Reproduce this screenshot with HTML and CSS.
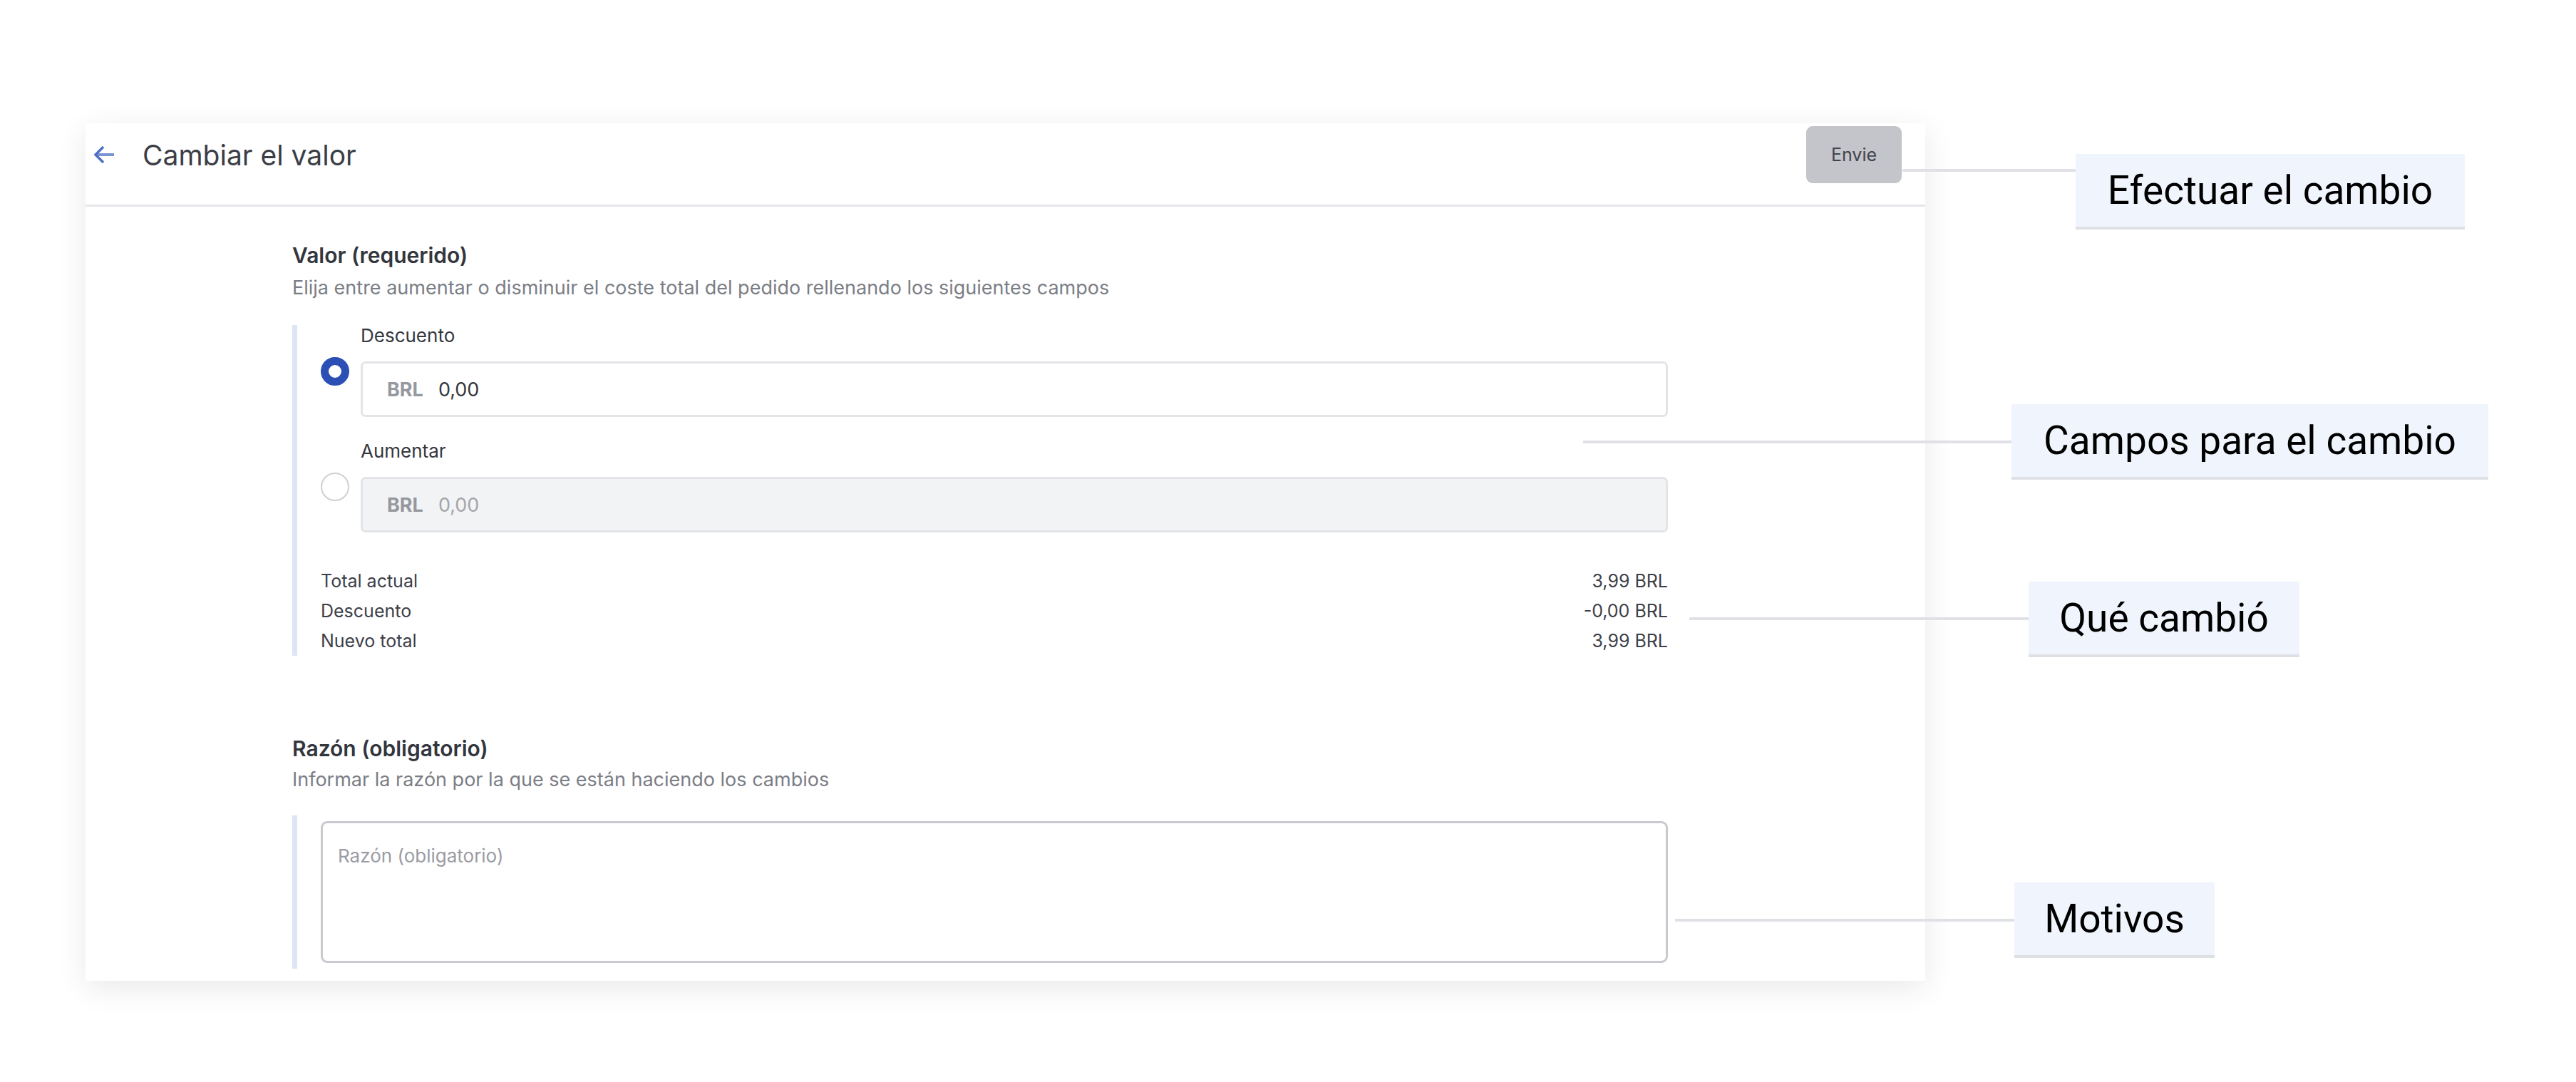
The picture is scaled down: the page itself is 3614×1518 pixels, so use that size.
FILE: index.html
```html
<!DOCTYPE html>
<html>
  <head>
    <link rel="stylesheet" href="styles.css">
  </head>
  <body>
    <div class="stage">
      <div class="card">
        <div class="card-header">
          <svg class="back" width="30" height="26" viewBox="0 0 30 26">
            <path d="M29 13H4" stroke="#7b95d2" stroke-width="4" fill="none" />
            <path d="M14 2L3 13l11 11" stroke="#4d6fc7" stroke-width="3.5" fill="none" />
          </svg>
          <h1 class="title">Cambiar el valor</h1>
          <button class="btn-submit">Envie</button>
        </div>

        <div class="card-body">
          <section class="block">
            <h2>Valor (requerido)</h2>
            <p class="hint">Elija entre aumentar o disminuir el coste total del pedido rellenando los siguientes campos</p>

            <div class="group">
              <div class="option">
                <span class="radio checked"></span>
                <div class="field">
                  <label>Descuento</label>
                  <div class="money-input">
                    <span class="currency">BRL</span>
                    <span class="amount">0,00</span>
                  </div>
                </div>
              </div>

              <div class="option second">
                <span class="radio"></span>
                <div class="field">
                  <label>Aumentar</label>
                  <div class="money-input disabled">
                    <span class="currency">BRL</span>
                    <span class="amount">0,00</span>
                  </div>
                </div>
              </div>

              <div class="summary">
                <div class="summary-row"><span>Total actual</span><span>3,99 BRL</span></div>
                <div class="summary-row"><span>Descuento</span><span>-0,00 BRL</span></div>
                <div class="summary-row"><span>Nuevo total</span><span>3,99 BRL</span></div>
              </div>
            </div>
          </section>

          <section class="block reason">
            <h2>Razón (obligatorio)</h2>
            <p class="hint">Informar la razón por la que se están haciendo los cambios</p>
            <div class="group boxed">
              <textarea class="reason-text" placeholder="Razón (obligatorio)"></textarea>
            </div>
          </section>
        </div>
      </div>

      <!-- callouts -->
      <div class="connector" style="left: 2669px; top: 237px; width: 243px"></div>
      <div class="callout" style="left: 2912px; top: 216px; width: 546px">Efectuar el cambio</div>

      <div class="connector" style="left: 2221px; top: 618px; width: 601px"></div>
      <div class="callout" style="left: 2822px; top: 567px; width: 669px">Campos para el cambio</div>

      <div class="connector" style="left: 2370px; top: 866px; width: 476px"></div>
      <div class="callout" style="left: 2846px; top: 816px; width: 380px">Qué cambió</div>

      <div class="connector" style="left: 2350px; top: 1289px; width: 476px"></div>
      <div class="callout" style="left: 2826px; top: 1238px; width: 281px">Motivos</div>
    </div>
  </body>
</html>
```

FILE: styles.css
```css
body {
  margin: 0;
  background: #ffffff;
  font-family: Inter, "Noto Sans", sans-serif;
  color: #34373e;
}
.stage {
  position: relative;
  width: 3614px;
  height: 1518px;
  padding: 173px 0 0 120px;
  box-sizing: border-box;
}
.card {
  width: 2581px;
  background: #fff;
  box-shadow: 0 10px 40px rgba(0, 0, 0, 0.09);
}
.card-header {
  display: flex;
  align-items: center;
  padding: 4px 33px 30px 11px;
  border-bottom: 3px solid #e6e7eb;
}
.back {
  flex: none;
}
.title {
  flex: 1;
  margin: 0 0 0 39px;
  font-size: 39px;
  font-weight: 400;
  color: #3b3e46;
}
.btn-submit {
  width: 134px;
  height: 80px;
  border: none;
  border-radius: 9px;
  background: #c4c5ca;
  color: #41444d;
  font-family: Inter, sans-serif;
  font-size: 25px;
}
.card-body {
  padding: 0 361px 17px 290px;
}
.block h2 {
  margin: 51px 0 0;
  font-size: 30px;
  line-height: 34px;
  font-weight: 600;
  color: #33363d;
}
.block.reason h2 {
  margin-top: 113px;
}
.hint {
  margin: 12px 0 0;
  font-size: 27px;
  line-height: 34px;
  color: #7b7e86;
}
.reason .hint {
  margin-top: 10px;
}
.group {
  margin-top: 35px;
  border-left: 7px solid #dce4f6;
  padding-left: 33px;
}
.group.boxed {
  margin-top: 33px;
  padding-top: 8px;
  padding-bottom: 8px;
}
.option {
  display: flex;
  gap: 16px;
}
.option.second {
  margin-top: 33px;
}
.radio {
  flex: none;
  width: 40px;
  height: 40px;
  margin-top: 45px;
  border-radius: 50%;
  border: 2px solid #cfd0d4;
  box-sizing: border-box;
}
.radio.checked {
  border: 11px solid #2b4fb5;
  background: #fff;
}
.field {
  flex: 1;
}
.field label {
  display: block;
  font-size: 26px;
  line-height: 30px;
  color: #34373e;
}
.money-input {
  display: flex;
  align-items: center;
  gap: 21px;
  height: 78px;
  margin-top: 21px;
  padding-left: 34px;
  border: 3px solid #e3e4e7;
  border-radius: 7px;
  box-sizing: border-box;
  font-size: 27px;
}
.money-input.disabled {
  background: #f2f3f5;
}
.currency {
  font-weight: 700;
  color: #96989e;
}
.amount {
  color: #34373e;
}
.disabled .amount {
  color: #a3a5ab;
}
.summary {
  margin-top: 47px;
  font-size: 25px;
  color: #3d4048;
}
.summary-row {
  display: flex;
  justify-content: space-between;
  line-height: 42px;
}
.reason-text {
  display: block;
  width: 100%;
  height: 199px;
  padding: 31px 21px;
  border: 3px solid #c9cacf;
  border-radius: 9px;
  box-sizing: border-box;
  resize: none;
  font-family: Inter, sans-serif;
  font-size: 26px;
  line-height: 30px;
  color: #34373e;
}
.reason-text::placeholder {
  color: #9a9ca3;
}
.connector {
  position: absolute;
  height: 4px;
  background: #e0e1e7;
}
.callout {
  position: absolute;
  height: 102px;
  display: flex;
  align-items: center;
  justify-content: center;
  background: #f0f4fc;
  border-bottom: 4px solid #dfe0e6;
  font-family: Roboto, sans-serif;
  font-size: 55px;
  color: #000;
}
```
